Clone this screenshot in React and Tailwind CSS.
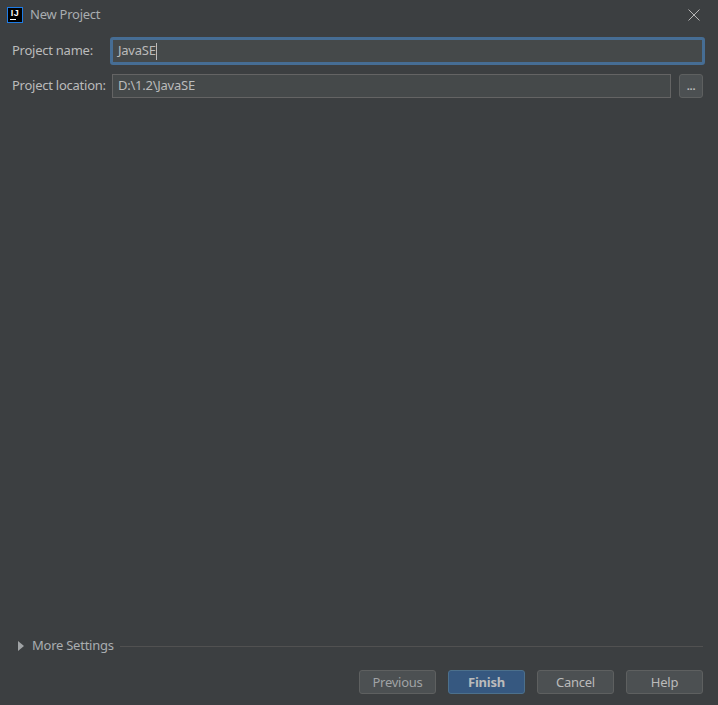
import React from "react";

const font = "font-['Noto_Sans','Open_Sans',sans-serif] text-[13px] tracking-[-0.25px] text-[#bbbbbb]";
const btn = "w-[77px] h-6 rounded-[3px] border border-[#5e6060] bg-[#4c5052] flex items-center justify-center pt-[2px]";

export default function App() {
  return (
    <div className={`w-[718px] h-[705px] bg-[#3c3f41] flex flex-col overflow-hidden ${font}`}>
      <div className="h-[30px] flex items-center justify-between pl-[7px] pr-[18px] shrink-0">
        <div className="flex items-center gap-[7px]">
          <div className="w-[16px] h-[16px] bg-black border border-[#1e7ce6] flex flex-col items-center justify-start pt-[1px]">
            <span className="font-['Liberation_Sans'] font-bold text-[9px] leading-[9px] text-white tracking-[0.5px]">IJ</span>
            <span className="w-[6px] h-px bg-white mt-[1px] self-start ml-[2px]"></span>
          </div>
          <span className="text-[#a9adb0]">New Project</span>
        </div>
        <svg width="12" height="12" viewBox="0 0 12 12" stroke="#b5b5b5" strokeWidth="1" fill="none">
          <path d="M0.5 0.5 L11.5 11.5 M11.5 0.5 L0.5 11.5" />
        </svg>
      </div>

      <div className="flex flex-col pl-3 pr-[15px] mt-[7px]">
        <div className="flex items-center h-[28px] -mr-[2px]">
          <label className="w-[98px] shrink-0">Project name:</label>
          <div className="flex-1 h-[28px] bg-[#45494a] border-[3px] border-[#466d94] rounded-[3px] pl-[5px] flex items-center">
            <span>JavaSE</span>
            <span className="w-px h-[17px] bg-[#bbbbbb]"></span>
          </div>
        </div>
        <div className="flex items-center h-6 mt-[9px] gap-2">
          <label className="w-[92px] shrink-0 whitespace-nowrap">Project location:</label>
          <div className="flex-1 h-6 bg-[#45494a] border border-[#646464] pl-[5px] flex items-center">D:\1.2\JavaSE</div>
          <div className="w-6 h-6 rounded-[3px] border border-[#5e6060] bg-[#4c5052] flex items-center justify-center font-bold text-[11px] pt-[1px]">...</div>
        </div>
      </div>

      <div className="flex-1"></div>

      <div className="flex items-center h-5 pl-[18px] pr-[15px]">
        <svg width="6" height="10" viewBox="0 0 6 10" className="shrink-0"><path d="M0 0 L6 5 L0 10 Z" fill="#a0a3a5" /></svg>
        <span className="ml-2 text-[#a9adb0] whitespace-nowrap">More Settings</span>
        <div className="flex-1 h-px bg-[#515151] ml-[6px]"></div>
      </div>

      <div className="flex justify-end gap-3 pr-[15px] pt-[14px] pb-[11px]">
        <button className={`${btn} text-[#a0a3a5]`}>Previous</button>
        <button className="w-[77px] h-6 rounded-[3px] border border-[#4c708c] bg-[#365880] flex items-center justify-center font-bold pt-[2px]">Finish</button>
        <button className={btn}>Cancel</button>
        <button className={btn}>Help</button>
      </div>
    </div>
  );
}
